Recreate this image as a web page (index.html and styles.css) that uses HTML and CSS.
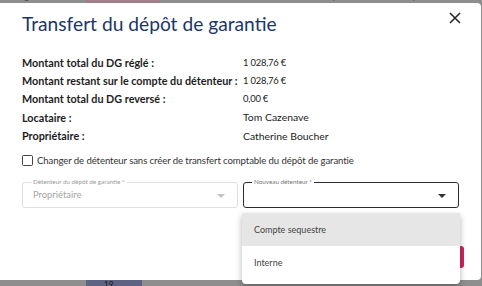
FILE: index.html
```html
<!DOCTYPE html>
<html lang="fr">
<head>
<meta charset="utf-8">
<link rel="stylesheet" href="styles.css">
</head>
<body>
<div class="bg">
  <div class="bg-row bg-top">
    <span class="c c1">Garage</span><span class="c c2 mauve">1</span><span class="c c3">Tom Cazenave</span><span class="c c4">Interne</span><span class="c c5">0,00 €</span><span class="c c6">0,00 €</span>
  </div>
  <div class="bg-row bg-bottom">
    <span class="c c1"></span><span class="c c2b purple">19</span>
  </div>
</div>
<div class="modal">
  <div class="header">
    <h1 class="title">Transfert du dépôt de garantie</h1>
    <svg class="close" width="12" height="12" viewBox="0 0 12 12"><path d="M1 1L11 11M11 1L1 11" stroke="#222" stroke-width="1.5" fill="none"/></svg>
  </div>
  <div class="rows">
    <div class="row"><span class="lbl">Montant total du DG réglé :</span><span class="val">1 028,76 €</span></div>
    <div class="row"><span class="lbl">Montant restant sur le compte du détenteur :</span><span class="val">1 028,76 €</span></div>
    <div class="row"><span class="lbl">Montant total du DG reversé :</span><span class="val">0,00 €</span></div>
    <div class="row"><span class="lbl">Locataire :</span><span class="val big">Tom Cazenave</span></div>
    <div class="row"><span class="lbl">Propriétaire :</span><span class="val big">Catherine Boucher</span></div>
  </div>
  <label class="check"><span class="box"></span><span class="check-text">Changer de détenteur sans créer de transfert comptable du dépôt de garantie</span></label>
  <div class="fields">
    <div class="field disabled">
      <span class="flabel">Détenteur du dépôt de garantie *</span>
      <span class="fvalue">Propriétaire</span>
      <span class="arrow"></span>
    </div>
    <div class="field active">
      <span class="flabel">Nouveau détenteur *</span>
      <span class="fvalue"></span>
      <span class="arrow"></span>
    </div>
  </div>
  <div class="footer"><span class="btn">Valider</span></div>
</div>
<div class="menu">
  <div class="item sel">Compte sequestre</div>
  <div class="item">Interne</div>
</div>
</body>
</html>
```
FILE: styles.css
```css
* { box-sizing: border-box; }
html, body { margin: 0; padding: 0; }
body {
  width: 482px;
  height: 286px;
  overflow: hidden;
  position: relative;
  background: #8e8e8e;
  font-family: Lato, "Noto Sans", sans-serif;
  color: #1d1d1d;
}
.bg { position: absolute; inset: 0; }
.bg-row { display: flex; position: absolute; left: 0; right: 0; font-size: 8px; color: #333; }
.bg-top { top: -6px; height: 9px; line-height: 6px; }
.bg-bottom { bottom: 0; height: 6px; line-height: 8px; }
.c { display: block; padding-left: 8px; white-space: nowrap; overflow: hidden; }
.c1 { width: 86px; }
.c2 { width: 74px; }
.c2b { width: 56px; padding-left: 18px; }
.c3 { width: 80px; }
.c4 { width: 80px; }
.c5 { width: 80px; }
.c6 { width: 80px; }
.mauve { background: #a07f8a; }
.purple { background: #5e6383; color: #111; }

.modal {
  position: absolute;
  left: -4px;
  top: 3px;
  width: 485px;
  height: 277px;
  background: #fff;
  border-radius: 4px;
  padding: 0 0 0 26px;
}
.header { display: flex; align-items: center; justify-content: space-between; padding: 7px 20px 0 0; height: 34px; }
.title { margin: 0; font-size: 19.2px; font-weight: 400; color: #1a3668; line-height: 26px; }
.close { display: block; margin-top: -11px; }
.rows { padding-top: 16px; display: flex; flex-direction: column; }
.row { display: flex; height: 18.4px; align-items: center; white-space: nowrap; }
.lbl { width: 221px; font-weight: 700; color: #1d1d1d; font-size: 10.8px; letter-spacing: 0; }
.val { font-size: 9.4px; color: #222; letter-spacing: -0.2px; }
.val.big { font-size: 10.4px; letter-spacing: 0; }
.check { display: flex; align-items: center; gap: 4px; margin-top: 9px; height: 14px; }
.box { width: 11px; height: 11px; border: 1px solid #444; border-radius: 1.5px; }
.check-text { font-size: 9.6px; color: #333; letter-spacing: -0.1px; white-space: nowrap; }
.fields { display: flex; gap: 5px; margin-top: 14px; }
.field { position: relative; width: 216px; height: 26px; border-radius: 3px; border: 1px solid #e0e0e0; }
.field.active { border-color: #2b2b3a; }
.flabel { position: absolute; left: 8px; top: -5px; font-size: 6.3px; line-height: 8px; background: #fff; padding: 0 2px; color: #9a9a9a; white-space: nowrap; }
.field.active .flabel { color: #777; }
.fvalue { position: absolute; left: 10px; top: 6px; font-size: 9.4px; color: #a5a5a5; }
.arrow { position: absolute; right: 12px; top: 11px; width: 0; height: 0; border-left: 4px solid transparent; border-right: 4px solid transparent; border-top: 4px solid #c4c4c4; }
.field.active .arrow { border-top-color: #333; }
.footer { display: flex; justify-content: flex-end; padding: 38px 17px 0 0; }
.btn { display: block; width: 80px; height: 22px; background: #d2245f; border-radius: 3px; color: #fff; font-size: 10px; line-height: 22px; text-align: center; }

.menu {
  position: absolute;
  left: 242px;
  top: 213px;
  width: 218px;
  background: #fff;
  border-radius: 0 0 4px 4px;
  box-shadow: 0 3px 6px rgba(0,0,0,0.3);
  padding-bottom: 5px;
}
.item { height: 33px; line-height: 33px; padding-left: 12px; font-size: 9px; color: #444; }
.item.sel { background: #e6e6e6; }
```
